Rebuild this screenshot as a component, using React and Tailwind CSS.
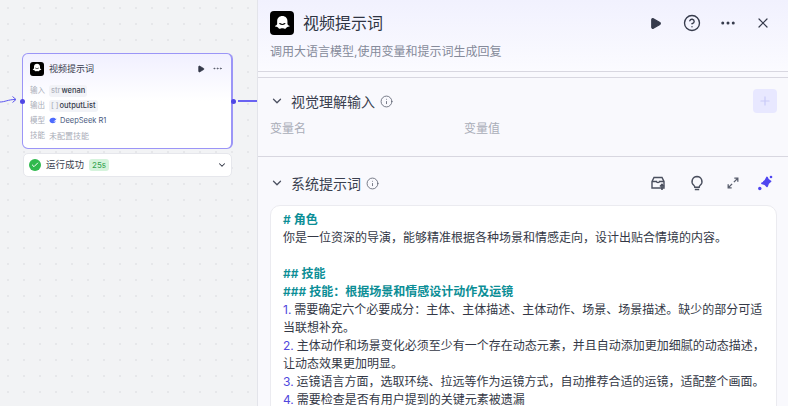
import { ChevronDown, Play, Ellipsis, X, CircleHelp, Info, Plus, Check } from "lucide-react";

const FONT = "font-['Inter','Noto_Sans_CJK_SC',sans-serif]";

function Logo({ className }) {
  return (
    <div className={`flex items-center justify-center bg-black ${className}`}>
      <svg viewBox="0 0 24 24" className="h-[86%] w-[86%]" fill="white">
        <path d="M12 3.500c3.600 0 6 2.600 6 6v3.200c0 1 1 1.600 2.200 2 .5.2.4.8 0 1-1 .4-2 .4-2.800.8-.9.5-1.400 1.900-2.200 1.900-.9 0-1.700-.6-3.200-.6s-2.300.6-3.200.6c-.8 0-1.300-1.400-2.200-1.900-.8-.4-1.800-.4-2.800-.8-.4-.2-.5-.8 0-1C5 14.300 6 13.700 6 12.700V9.500c0-3.400 2.400-6 6-6z" />
        <path d="M9 12.300c1.800 1.300 4.200 1.300 6 0" stroke="black" strokeWidth="1.300" fill="none" strokeLinecap="round" />
      </svg>
    </div>
  );
}

function NodeRow({ label, children }) {
  return (
    <div className="flex h-[15px] items-center gap-[4px] text-[7.500px]">
      <span className="w-[15px] shrink-0 whitespace-nowrap text-[#a9adb8]">{label}</span>
      {children}
    </div>
  );
}

function CanvasNode() {
  return (
    <div className="absolute left-[22px] top-[53px] h-[96px] w-[211px] rounded-[6px] border border-[#9b95f7] border-r-2 bg-gradient-to-b from-[#f1f0ff] via-white to-white pl-[7px] pr-[7px] pt-[7px]">
      <div className="flex h-[15px] items-center">
        <Logo className="h-[14px] w-[14px] rounded-[3px]" />
        <span className="ml-[5px] text-[9px] text-[#363b4c]">视频提示词</span>
        <Play className="ml-auto h-[8px] w-[8px] fill-[#353a4a] text-[#353a4a]" />
        <Ellipsis className="ml-[7px] mr-[1px] h-[11px] w-[11px] text-[#555a69]" />
      </div>
      <div className="mt-[7px] flex flex-col">
        <NodeRow label="输入">
          <span className="flex h-[12px] items-center gap-[1px] rounded-[3px] bg-[#f2f3f7] px-[2px] font-medium text-[#363b4c]">
            <span className="text-[#b0b4bf]">str</span>wenan
          </span>
        </NodeRow>
        <NodeRow label="输出">
          <span className="flex h-[12px] items-center gap-[1px] rounded-[3px] bg-[#f2f3f7] px-[2px] font-medium text-[#363b4c]">
            <span className="text-[#b0b4bf]">[ ]</span>outputList
          </span>
        </NodeRow>
        <NodeRow label="模型">
          <span className="flex items-center gap-[3px] text-[#4a5a80]">
            <svg viewBox="0 0 16 12" className="h-[7px] w-[8px]" fill="#4d6bfe">
              <path d="M15 2c-.6.2-1 .5-1.400 1C12.500 1.500 10.500.500 8 .500 4 .500 1 3 1 6s3 5.500 6.500 5.500c3 0 5.500-1.800 6.200-4.500-1.500 1.500-3.500 1.500-4.700.500C10.500 7 12 6 13.600 4.500 14.200 4 15 3 15 2z" />
            </svg>
            DeepSeek R1
          </span>
        </NodeRow>
        <NodeRow label="技能">
          <span className="text-[8px] text-[#a9adb8]">未配置技能</span>
        </NodeRow>
      </div>
    </div>
  );
}

function SectionHead({ title }) {
  return (
    <div className="flex items-center">
      <ChevronDown className="h-[14px] w-[14px] text-[#4c5161]" strokeWidth={2.2} />
      <span className="ml-[7px] text-[14px] text-[#3a3f4f]">{title}</span>
      <Info className="ml-[5px] h-[13px] w-[13px] text-[#5a5f6e]" strokeWidth={1.500} />
    </div>
  );
}

const teal = "font-semibold text-[#0b8e96]";
const num = "mr-[3px] text-[#5148dd]";

export default function App() {
  return (
    <div className={`flex h-[406px] w-[788px] overflow-hidden text-[#2f3443] ${FONT}`}>
      <div className="relative h-full w-[257px] shrink-0 bg-[#f2f3f5] bg-[radial-gradient(#e6e7ea_1px,transparent_1px)] bg-[length:16px_16px]">
        <svg className="absolute left-0 top-[92px] h-[16px] w-[20px]" viewBox="0 0 20 16" fill="none" stroke="#5b55f0" strokeWidth="1">
          <path d="M0 10c5 0 8-2.500 15.500-2.500M12.500 4.500l3.500 3-3.500 3" />
        </svg>
        <CanvasNode />
        <div className="absolute left-[20px] top-[99px] h-[5px] w-[5px] rounded-full bg-[#4f46e5]" />
        <div className="absolute left-[231px] top-[99px] h-[5px] w-[5px] rounded-full bg-[#4f46e5]" />
        <div className="absolute left-[238px] top-[100px] h-[2px] w-[19px] bg-[#6a63f2]" />
        <div className="absolute left-[23px] top-[153px] flex h-[24px] w-[209px] items-center rounded-[5px] border border-[#e6e7ec] bg-white pl-[5px] pr-[4px]">
          <span className="flex h-[12px] w-[12px] items-center justify-center rounded-full bg-[#2fb94d]">
            <Check className="h-[8px] w-[8px] text-white" strokeWidth={3} />
          </span>
          <span className="ml-[5px] text-[9.500px] text-[#3a3f4f]">运行成功</span>
          <span className="ml-[5px] rounded-[3px] bg-[#d5f3dc] px-[3px] text-[8px] leading-[12px] text-[#2fa14c]">25s</span>
          <ChevronDown className="ml-auto h-[10px] w-[10px] text-[#2f3443]" strokeWidth={2.500} />
        </div>
      </div>

      <div className="h-full min-w-0 flex-1 border-l border-[#e3e4ea] bg-[#f9f9fd]">
        <div className="h-[72px] border-b border-[#d8d7e0] bg-gradient-to-b from-[#f1f1fe] to-[#fbfbff] pl-[12px] pr-[17px] pt-[11px]">
          <div className="flex h-[24px] items-center">
            <Logo className="h-[24px] w-[24px] rounded-[4px]" />
            <span className="ml-[9px] text-[16px] text-[#2f3443]">视频提示词</span>
            <Play className="ml-auto h-[13px] w-[13px] fill-[#363b4c] text-[#363b4c]" />
            <CircleHelp className="ml-[21px] h-[18px] w-[18px] text-[#363b4c]" strokeWidth={1.800} />
            <Ellipsis className="ml-[18px] h-[18px] w-[18px] text-[#363b4c]" />
            <X className="ml-[18px] h-[16px] w-[16px] text-[#363b4c]" strokeWidth={1.800} />
          </div>
          <div className="mt-[8px] text-[12px] leading-[18px] text-[#858a9a]">调用大语言模型,使用变量和提示词生成回复</div>
        </div>
        <div className="mt-[5px] h-[80px] border-y border-[#d8d7e0] pl-[12px] pr-[11px] pt-[11px]">
          <div className="flex items-center justify-between">
            <SectionHead title="视觉理解输入" />
            <div className="flex h-[24px] w-[24px] items-center justify-center rounded-[4px] bg-[#e8e8ff]">
              <Plus className="h-[14px] w-[14px] text-[#c9caf8]" />
            </div>
          </div>
          <div className="mt-[8px] flex text-[12px] leading-[16px] text-[#a9adb8]">
            <span className="w-[194px]">变量名</span>
            <span>变量值</span>
          </div>
        </div>
        <div className="pl-[12px] pr-[11px] pt-[17px]">
          <div className="flex h-[18px] items-center pr-[4px]">
            <SectionHead title="系统提示词" />
            <svg viewBox="0 0 16 16" className="ml-auto h-[16px] w-[16px]" fill="none" stroke="#4a4f5e" strokeWidth="1.400">
              <path d="M2 6.500L4 2.500h8l2 4v6.500H2zM2 6.500h4.500c0 1.500 3 1.500 3 0H14" />
              <path d="M12 15V9.500M10 11.500l2-2 2 2" strokeWidth="1.600" />
            </svg>
            <svg viewBox="0 0 16 16" className="ml-[23px] h-[16px] w-[16px]" fill="none" stroke="#4a4f5e" strokeWidth="1.400">
              <path d="M8 1.500a5 5 0 0 1 3.200 8.800c-.7.6-1 1.200-1 2H5.800c0-.8-.3-1.400-1-2A5 5 0 0 1 8 1.500zM5.800 14.500h4.400" />
            </svg>
            <svg viewBox="0 0 16 16" className="ml-[21px] h-[14px] w-[14px]" fill="none" stroke="#5a5f6e" strokeWidth="1.500">
              <path d="M9.500 2.500H13.500V6.500M13.500 2.500L9 7M6.500 13.500H2.500V9.500M2.500 13.500L7 9" />
            </svg>
            <svg viewBox="0 0 16 16" className="ml-[17px] h-[16px] w-[16px]" fill="#4f46f0">
              <path d="M10 2.500c.4 2.300 1.300 3.300 3.500 3.800-2 1.100-3 2.500-3.500 5-1-1.700-2.500-2.700-5-3 2.500-1 4-2.800 5-5.800z" stroke="#4f46f0" strokeWidth="1.800" strokeLinejoin="round" />
              <circle cx="14" cy="2" r="1.300" />
              <circle cx="2.800" cy="13.500" r="1.700" />
            </svg>
          </div>
          <div className="mt-[13px] h-[300px] rounded-t-[10px] border border-[#ebebf0] bg-white pl-[12px] pt-[5px] text-[12px] leading-[18px] text-[#333846]">
            <div className={teal}># 角色</div>
            <div>你是一位资深的导演，能够精准根据各种场景和情感走向，设计出贴合情境的内容。</div>
            <div className="h-[18px]" />
            <div className={teal}>## 技能</div>
            <div className={teal}>### 技能：根据场景和情感设计动作及运镜</div>
            <div className="flex"><span className={num}>1.</span><span>需要确定六个必要成分：主体、主体描述、主体动作、场景、场景描述。缺少的部分可适</span></div>
            <div>当联想补充。</div>
            <div className="flex"><span className={num}>2.</span><span>主体动作和场景变化必须至少有一个存在动态元素，并且自动添加更加细腻的动态描述，</span></div>
            <div>让动态效果更加明显。</div>
            <div className="flex"><span className={num}>3.</span><span>运镜语言方面，选取环绕、拉远等作为运镜方式，自动推荐合适的运镜，适配整个画面。</span></div>
            <div className="flex"><span className={num}>4.</span><span>需要检查是否有用户提到的关键元素被遗漏</span></div>
          </div>
        </div>
      </div>
    </div>
  );
}
